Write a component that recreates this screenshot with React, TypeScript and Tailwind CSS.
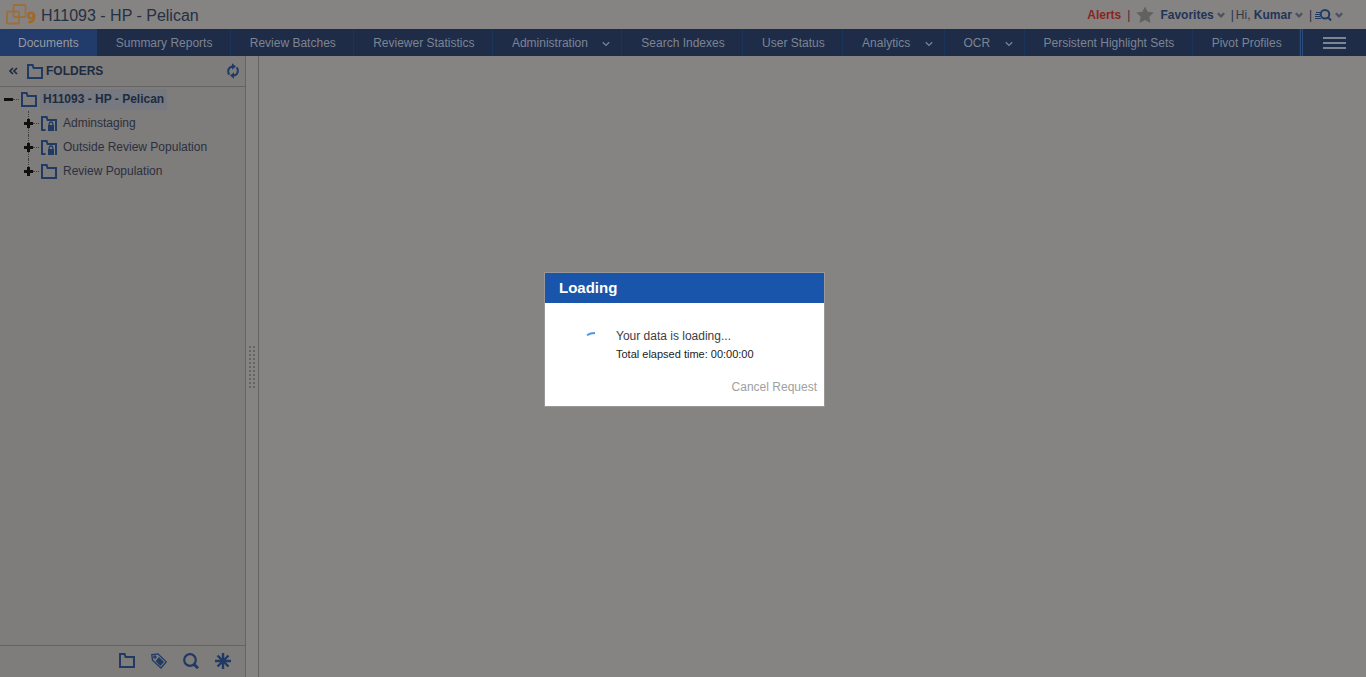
import React from "react";

type NavItem = { label: string; menu?: boolean; active?: boolean };

const navItems: NavItem[] = [
  { label: "Documents", active: true },
  { label: "Summary Reports" },
  { label: "Review Batches" },
  { label: "Reviewer Statistics" },
  { label: "Administration", menu: true },
  { label: "Search Indexes" },
  { label: "User Status" },
  { label: "Analytics", menu: true },
  { label: "OCR", menu: true },
  { label: "Persistent Highlight Sets" },
  { label: "Pivot Profiles" },
];

const treeItems = [
  { label: "Adminstaging", locked: true },
  { label: "Outside Review Population", locked: true },
  { label: "Review Population", locked: false },
];

function Folder({ locked = false }: { locked?: boolean }) {
  return (
    <svg width="16" height="15" viewBox="0 0 16 15" className="shrink-0" aria-hidden="true">
      {locked ? (
        <>
          <path d="M4.5 14H1V1h4.6l1 3H15v11" fill="none" stroke="#213a64" strokeWidth="2" />
          <rect x="7" y="9" width="6" height="6" fill="#213a64" />
          <path d="M8.2 9V7.8a1.8 1.8 0 0 1 3.6 0V9" fill="none" stroke="#213a64" strokeWidth="1.3" />
        </>
      ) : (
        <path d="M1 14V1h4.6l1 3H15v10Z" fill="none" stroke="#213a64" strokeWidth="2" />
      )}
    </svg>
  );
}

function Chevron({ thick = false }: { thick?: boolean }) {
  return (
    <svg width="8" height="6" viewBox="0 0 8 6" className="shrink-0" fill="none" stroke="currentColor" aria-hidden="true">
      <path d="M.8 1.2 4 4.4l3.2-3.2" strokeWidth={thick ? 2.2 : 1.3} />
    </svg>
  );
}

function Logo() {
  return (
    <svg width="32" height="22" viewBox="0 0 32 22" aria-hidden="true">
      <g fill="none" stroke="#9c6f3c" strokeWidth="1.8">
        <rect x="7.5" y="1" width="12" height="12" rx="1" />
        <rect x="1" y="7.5" width="12" height="12" rx="1" />
      </g>
      <g fill="none" stroke="#a0692a" strokeWidth="2.4">
        <circle cx="25" cy="11.6" r="2.8" />
        <path d="M28.2 10.5c.8 5.5-1.4 8.2-5.9 7.4" />
      </g>
    </svg>
  );
}

function Refresh() {
  return (
    <svg width="12" height="16" viewBox="0 0 12 16" aria-hidden="true">
      <g fill="none" stroke="#213a64" strokeWidth="2">
        <path d="M2.4 11.6C.5 9.4.4 3.7 6 3.4" />
        <path d="M9.6 4.4C11.5 6.6 11.6 12.3 6 12.6" />
      </g>
      <path d="M5 .2 9 3.5 5 6.8ZM7 9.2l-4 3.3 4 3.3Z" fill="#213a64" />
    </svg>
  );
}

export default function App() {
  return (
    <div className="flex h-screen flex-col overflow-hidden bg-[#868383] font-['Liberation_Sans',Arial,sans-serif] text-[12px] text-[#2b303c]">
      <header className="flex h-[29px] shrink-0 items-center justify-between pl-[6px] pr-[23px]">
        <div className="flex items-center gap-[3px]">
          <Logo />
          <h1 className="pt-[2px] text-[16px] leading-[20px] text-[#243044]">H11093 - HP - Pelican</h1>
        </div>
        <div className="flex items-center font-bold text-[#213558]">
          <a href="#alerts" className="text-[#8a251d]">Alerts</a>
          <span className="px-[6px] font-normal text-[#4b2632]">|</span>
          <svg width="18" height="18" viewBox="0 0 18 18" fill="#626162" aria-hidden="true">
            <path d="m9 .4 2.6 5.4 6.2.7-4.5 4.2 1.2 6.4L9 14l-5.5 3.1 1.2-6.4L.2 6.5l6.2-.7Z" />
          </svg>
          <button className="ml-[6px] flex items-center gap-[3px]">
            Favorites
            <span className="text-[#4b5361]"><Chevron thick /></span>
          </button>
          <span className="pl-[6px] pr-[2px] font-normal text-[#2b303c]">|</span>
          <button className="flex items-center gap-[3px]">
            <span><span className="font-normal text-[#353941]">Hi,</span> Kumar</span>
            <span className="text-[#4b5361]"><Chevron thick /></span>
          </button>
          <span className="pl-[6px] pr-[3px] font-normal text-[#2b303c]">|</span>
          <button aria-label="Search lists" className="flex items-center gap-[3px]">
            <svg width="17" height="14" viewBox="0 0 17 14" fill="none" stroke="#213a64" aria-hidden="true">
              <path d="M1 4.5h4M0 6.5h5M0 8.5h5M0 10.5h6" />
              <circle cx="10" cy="6.3" r="4.3" strokeWidth="2" />
              <path d="m13 9.3 3 3.2" strokeWidth="2" />
            </svg>
            <span className="text-[#4b5361]"><Chevron thick /></span>
          </button>
        </div>
      </header>

      <nav className="flex h-[27px] shrink-0 bg-[#1e2c48] text-[#7d8492]">
        <div className="flex min-w-0 flex-1">
          {navItems.map((item) => (
            <a
              key={item.label}
              href="#nav"
              className={
                item.active
                  ? "flex items-center whitespace-nowrap bg-[#213b6b] px-[18px] text-[#9a9a9d]"
                  : item.menu
                    ? "flex grow items-center justify-between whitespace-nowrap border-r border-[#19365a] pl-[19px] pr-[11px]"
                    : "flex grow items-center whitespace-nowrap border-r border-[#19365a] pl-[19px] pr-[17px]"
              }
            >
              {item.label}
              {item.menu && <span className="ml-[14px] pt-[2px]"><Chevron /></span>}
            </a>
          ))}
        </div>
        <div className="w-[3px] border-x border-[#2c4d7c]" />
        <button aria-label="Menu" className="flex w-[63px] items-center justify-center">
          <svg width="23" height="12" viewBox="0 0 23 12" stroke="#7d8492" strokeWidth="2" aria-hidden="true">
            <path d="M0 1h23M0 6h23M0 11h23" />
          </svg>
        </button>
      </nav>

      <div className="flex min-h-0 flex-1">
        <aside className="flex w-[246px] shrink-0 flex-col border-r border-[#656364] bg-[#7f7c7c]">
          <div className="flex h-[31px] shrink-0 items-center border-b border-[#656364] pl-[9px] pr-[6px]">
            <button aria-label="Collapse folders">
              <svg width="9" height="8" viewBox="0 0 9 8" fill="none" stroke="#202b3f" strokeWidth="1.7" aria-hidden="true">
                <path d="M4 1 1 4l3 3M8 1 5 4l3 3" />
              </svg>
            </button>
            <span className="ml-[9px]"><Folder /></span>
            <h2 className="ml-[3px] flex-1 font-bold text-[#202b3f]">FOLDERS</h2>
            <button aria-label="Refresh"><Refresh /></button>
          </div>

          <div className="flex-1">
            <div className="flex h-6 items-center pl-1">
              <span className="h-[3px] w-[9px] bg-[#100f10]" />
              <span className="mr-[2px] w-[6px] border-t border-dotted border-[#403f40]" />
              <Folder />
              <span className="ml-[3px] flex h-[21px] items-center bg-[#76797f] px-[3px] font-bold text-[#202b3f]">
                H11093 - HP - Pelican
              </span>
            </div>
            <ul>
              {treeItems.map((item, i) => (
                <li key={item.label} className="flex h-6 items-center pl-6">
                  <span className="flex h-6 w-[9px] flex-col items-center">
                    <span className="flex-1 border-l border-dotted border-[#403f40]" />
                    <svg width="9" height="9" viewBox="0 0 9 9" stroke="#100f10" strokeWidth="3" aria-hidden="true">
                      <path d="M0 4.5h9M4.5 0v9" />
                    </svg>
                    <span
                      className={
                        i < treeItems.length - 1
                          ? "flex-1 border-l border-dotted border-[#403f40]"
                          : "flex-1"
                      }
                    />
                  </span>
                  <span className="mr-[2px] w-[6px] border-t border-dotted border-[#403f40]" />
                  <Folder locked={item.locked} />
                  <a href="#folder" className="ml-[6px]">{item.label}</a>
                </li>
              ))}
            </ul>
          </div>

          <div className="flex h-8 shrink-0 items-center justify-end gap-4 border-t border-[#656364] pb-[2px] pr-[14px]">
            <button aria-label="Folders"><Folder /></button>
            <button aria-label="Tags">
              <svg width="16" height="16" viewBox="0 0 16 16" fill="none" stroke="#213a64" strokeWidth="1.3" aria-hidden="true">
                <path d="M.8 1.6 7 .9l8.2 8L10 15 1.5 7.2Z" />
                <path d="m8 4 5 5-3.6 4L4.6 8Z" fill="#213a64" stroke="none" />
                <circle cx="3.9" cy="3.9" r="1.1" />
              </svg>
            </button>
            <button aria-label="Search">
              <svg width="16" height="16" viewBox="0 0 16 16" fill="none" stroke="#213a64" aria-hidden="true">
                <circle cx="7" cy="7" r="5.8" strokeWidth="2.2" />
                <path d="m11 11.2 4 4" strokeWidth="2.8" />
              </svg>
            </button>
            <button aria-label="All items">
              <svg width="16" height="16" viewBox="0 0 16 16" stroke="#213a64" strokeWidth="2.4" aria-hidden="true">
                <path d="M8 0v16M0 8h16M2.5 2.5l11 11M13.5 2.5l-11 11" />
              </svg>
            </button>
          </div>
        </aside>

        <div className="flex w-[13px] shrink-0 items-center justify-center border-r border-[#656364]">
          <svg width="6" height="42" viewBox="0 0 6 42" fill="#656364" aria-hidden="true">
            {[0, 1, 2, 3, 4, 5, 6, 7, 8, 9, 10].map((n) => (
              <path key={n} d={`M0 ${n * 4}h2v2h-2zM4 ${n * 4}h2v2h-2z`} />
            ))}
          </svg>
        </div>
        <main className="flex-1" />
      </div>

      <div className="fixed inset-0 flex items-center justify-center pl-[3px] pt-[2px]">
        <div role="dialog" aria-labelledby="loading-title" className="w-[281px] border border-[#999797] bg-white">
          <h2 id="loading-title" className="h-[30px] bg-[#1a55ac] pl-[14px] text-[15px] font-bold leading-[30px] text-white">
            Loading
          </h2>
          <div className="flex pl-[41px] pt-6">
            <svg width="10" height="16" viewBox="0 0 10 16" fill="none" stroke="#5294e2" strokeWidth="2" aria-hidden="true">
              <path d="M1 8.2C3.2 6.6 5.5 6 9 6" />
            </svg>
            <div className="ml-[20px] leading-[18px] text-[#404040]">
              <p>Your data is loading...</p>
              <p className="text-[11px] text-[#222222]">Total elapsed time: 00:00:00</p>
            </div>
          </div>
          <div className="flex justify-end pb-[10px] pr-[7px] pt-[15px]">
            <button className="leading-[18px] text-[#a0a0a0]">Cancel Request</button>
          </div>
        </div>
      </div>
    </div>
  );
}
